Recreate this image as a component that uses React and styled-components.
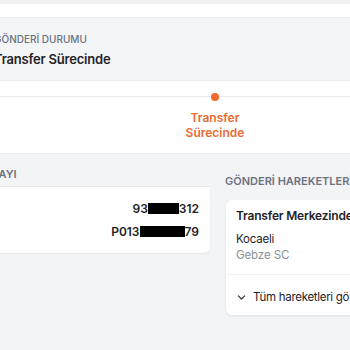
import React from 'react';
import styled, { createGlobalStyle } from 'styled-components';

const GlobalStyle = createGlobalStyle`
  html, body {
    margin: 0;
    padding: 0;
    background: #f3f4f6;
    overflow: hidden;
    font-family: Inter, "Noto Sans", "Liberation Sans", sans-serif;
    color: #1f2328;
  }
`;

const Page = styled.div`
  width: 350px;
  height: 350px;
  overflow: hidden;
`;

const TopStrip = styled.div`
  height: 4px;
  background: #f1f2f4;
`;

const WhiteBar = styled.div`
  height: 13px;
  background: #ffffff;
  border-bottom: 1px solid #eceef0;
`;

const StatusHeader = styled.div`
  height: 62px;
  background: #f4f5f7;
  padding: 15px 0 0 0;
  box-sizing: border-box;
  margin-left: -6px;
`;

const Label = styled.div`
  font-size: 10px;
  font-weight: 500;
  color: #6b7280;
  text-transform: uppercase;
  line-height: 13px;
`;

const StatusTitle = styled.div`
  margin-top: 4px;
  font-size: 13px;
  font-weight: 600;
  letter-spacing: -0.2px;
  color: #1f2328;
  line-height: 18px;
`;

const StatusBody = styled.div`
  height: 72px;
  background: #ffffff;
  border-top: 1px solid #eceef0;
  border-bottom: 1px solid #eceef0;
  position: relative;
`;

const TrackLine = styled.div`
  position: absolute;
  left: 0;
  right: 0;
  top: 15px;
  height: 1px;
  background: #e8e9ec;
`;

const Steps = styled.div`
  display: flex;
  padding-left: 175px;
  padding-top: 12px;
  position: relative;
`;

const Step = styled.div`
  width: 80px;
  display: flex;
  flex-direction: column;
  align-items: center;
`;

const Dot = styled.div`
  width: 8px;
  height: 8px;
  border-radius: 50%;
  background: ${({ active }) => (active ? '#ef6a2c' : '#d1d5db')};
`;

const StepLabel = styled.div`
  margin-top: 9px;
  font-size: 12px;
  font-weight: 600;
  line-height: 15px;
  text-align: center;
  color: ${({ active }) => (active ? '#e86c33' : '#6b7280')};
`;

const Columns = styled.div`
  display: flex;
  gap: 15px;
  margin-left: -75px;
`;

const LeftCol = styled.div`
  width: 285px;
  display: flex;
  flex-direction: column;
`;

const LeftHeader = styled.div`
  height: 33px;
  padding-top: 13px;
  box-sizing: border-box;
  background: #f3f4f6;
  border-bottom: 1px solid #e8e9ec;
`;

const HeaderText = styled.div`
  font-size: 11px;
  font-weight: 600;
  color: #6b7280;
  line-height: 14px;
  white-space: nowrap;
`;

const DetailCard = styled.div`
  background: #ffffff;
  height: 66px;
  padding: 14px 11px 0 0;
  box-sizing: border-box;
  border-radius: 0 0 6px 0;
  box-shadow: 0 1px 2px rgba(0, 0, 0, 0.06);
  display: flex;
  flex-direction: column;
  align-items: flex-end;
  gap: 8px;
`;

const Value = styled.div`
  font-size: 12px;
  font-weight: 600;
  line-height: 15px;
  color: #1f2328;
  display: flex;
  align-items: center;
`;

const Redact = styled.span`
  display: inline-block;
  width: ${({ w }) => w}px;
  height: 11px;
  background: #000;
`;

const RightCol = styled.div`
  flex: 1;
  min-width: 0;
  padding-top: 20px;
`;

const RightHeader = styled(HeaderText)`
  margin-bottom: 12px;
`;

const MoveCard = styled.div`
  width: 260px;
  margin-left: 1px;
  background: #ffffff;
  border-radius: 6px;
  box-shadow: 0 1px 3px rgba(0, 0, 0, 0.08);
`;

const MoveBody = styled.div`
  padding: 8px 10px 11px;
  border-bottom: 1px solid #f1f2f4;
`;

const MoveTitle = styled.div`
  font-size: 12px;
  font-weight: 600;
  letter-spacing: -0.2px;
  line-height: 15px;
  color: #1f2328;
`;

const Place = styled.div`
  margin-top: 8px;
  font-size: 11.5px;
  letter-spacing: -0.2px;
  line-height: 16px;
  color: #1f2328;
`;

const Branch = styled.div`
  font-size: 11.5px;
  letter-spacing: -0.1px;
  line-height: 16px;
  color: #8a8f98;
`;

const MoveFooter = styled.div`
  display: flex;
  align-items: center;
  gap: 7px;
  padding: 14px 10px 10px 11px;
  font-size: 11.5px;
  letter-spacing: -0.3px;
  line-height: 16px;
  color: #1f2328;
  white-space: nowrap;
`;

const Chevron = () => (
  <svg width="9" height="9" viewBox="0 0 10 10" fill="none">
    <path d="M1.5 3.2 L5 6.7 L8.5 3.2" stroke="#333" strokeWidth="1.3" strokeLinecap="round" strokeLinejoin="round" />
  </svg>
);

export default function App() {
  return (
    <Page>
      <GlobalStyle />
      <TopStrip />
      <WhiteBar />
      <StatusHeader>
        <Label>Gönderİ Durumu</Label>
        <StatusTitle>Transfer Sürecinde</StatusTitle>
      </StatusHeader>
      <StatusBody>
        <TrackLine />
        <Steps>
          <Step>
            <Dot active />
            <StepLabel active>Transfer<br />Sürecinde</StepLabel>
          </Step>
        </Steps>
      </StatusBody>
      <Columns>
        <LeftCol>
          <LeftHeader>
            <HeaderText>GÖNDERİ DETAYI</HeaderText>
          </LeftHeader>
          <DetailCard>
            <Value>93<Redact w={31} />312</Value>
            <Value>P013<Redact w={45} />79</Value>
          </DetailCard>
        </LeftCol>
        <RightCol>
          <RightHeader>GÖNDERİ HAREKETLERİ</RightHeader>
          <MoveCard>
            <MoveBody>
              <MoveTitle>Transfer Merkezinde</MoveTitle>
              <Place>Kocaeli</Place>
              <Branch>Gebze SC</Branch>
            </MoveBody>
            <MoveFooter>
              <Chevron />
              Tüm hareketleri göster
            </MoveFooter>
          </MoveCard>
        </RightCol>
      </Columns>
    </Page>
  );
}
